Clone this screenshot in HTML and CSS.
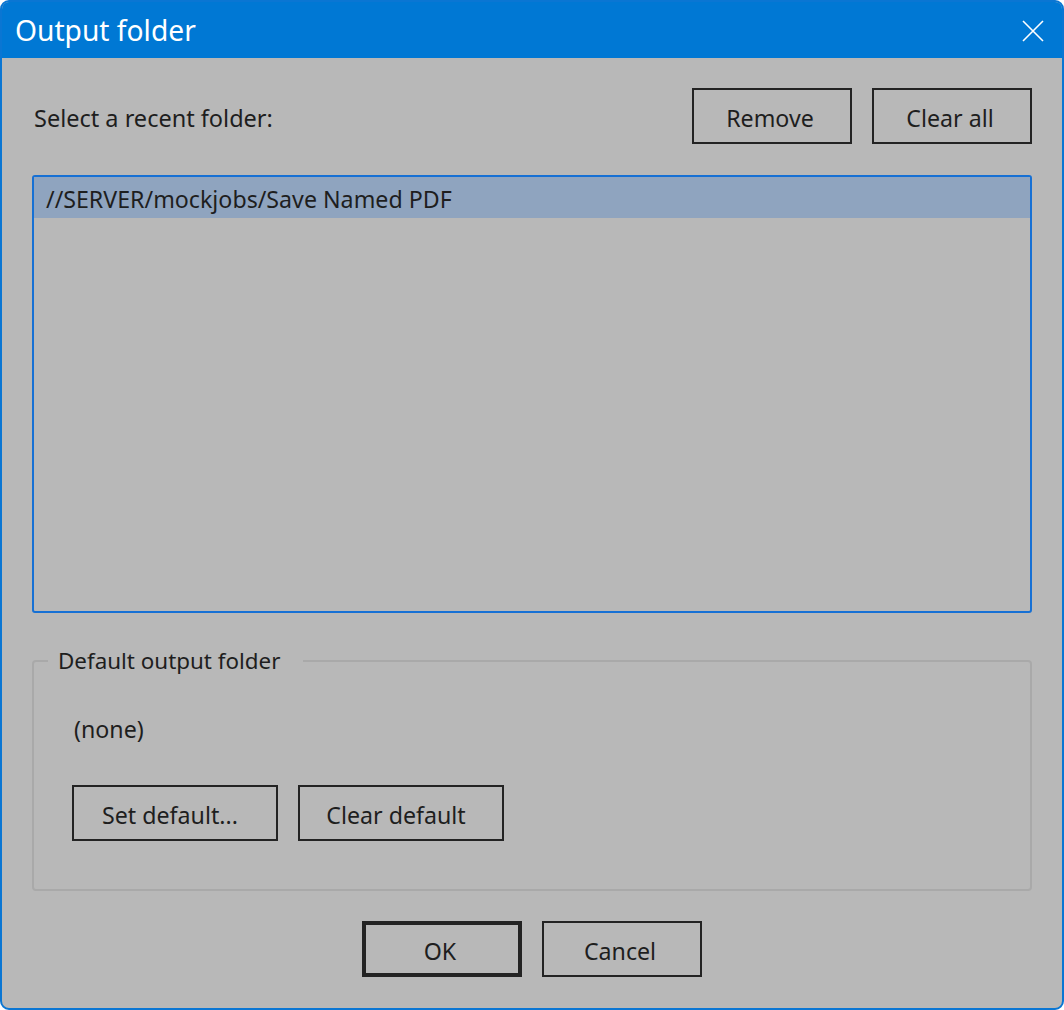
FILE: index.html
```html
<!DOCTYPE html>
<html lang="en">
<head>
<meta charset="utf-8">
<title>Output folder</title>
<link rel="stylesheet" href="styles.css">
</head>
<body>
<div class="window">
  <div class="titlebar">
    <span class="title">Output folder</span>
    <button class="close" aria-label="Close">
      <svg width="22" height="22" viewBox="0 0 22 22"><path d="M1 1 L21 21 M21 1 L1 21" stroke="#ffffff" stroke-width="1.6" fill="none"/></svg>
    </button>
  </div>
  <div class="content">
    <div class="toprow">
      <span class="label">Select a recent folder:</span>
      <div class="btns">
        <button class="btn">Remove</button>
        <button class="btn">Clear all</button>
      </div>
    </div>
    <div class="listbox">
      <div class="item selected">//SERVER/mockjobs/Save Named PDF</div>
    </div>
    <fieldset class="group">
      <legend class="legend">Default output folder</legend>
      <div class="none">(none)</div>
      <div class="groupbtns">
        <button class="btn wide">Set default...</button>
        <button class="btn wide">Clear default</button>
      </div>
    </fieldset>
    <div class="footer">
      <button class="btn default">OK</button>
      <button class="btn">Cancel</button>
    </div>
  </div>
</div>
</body>
</html>
```
FILE: styles.css
```css
html, body {
  margin: 0;
  padding: 0;
  background: #ffffff;
}
body {
  font-family: "Noto Sans", "Open Sans", sans-serif;
  font-size: 23.2px;
  color: #1e1e1e;
}
.window {
  width: 1064px;
  height: 1010px;
  box-sizing: border-box;
  border: 2px solid #0a76d3;
  border-radius: 9px;
  overflow: hidden;
  background: #b8b8b8;
  display: flex;
  flex-direction: column;
}
.titlebar {
  height: 56px;
  flex: none;
  background: #0078d4;
  display: flex;
  align-items: center;
  justify-content: space-between;
  padding: 0 18px 0 13px;
}
.title {
  color: #ffffff;
  font-size: 28.2px;
  line-height: 1;
}
.close {
  background: none;
  border: 0;
  padding: 0;
  width: 22px;
  height: 22px;
  display: flex;
  margin-top: 1px;
}
.content {
  flex: 1;
  padding: 30px 30px 30px;
  display: flex;
  flex-direction: column;
}
.toprow {
  height: 56px;
  display: flex;
  align-items: center;
  justify-content: space-between;
  margin-bottom: 31px;
}
.label {
  padding-left: 2px;
  padding-top: 4px;
  font-size: 23.5px;
}
.btns, .groupbtns, .footer {
  display: flex;
  gap: 20px;
}
.btn {
  box-sizing: border-box;
  width: 160px;
  height: 56px;
  border: 2px solid #232323;
  background: transparent;
  font-family: inherit;
  font-size: 23.2px;
  color: #1e1e1e;
  padding: 3px 4px 0 0;
}
.btn.wide {
  width: 206px;
  padding-right: 10px;
}
.btn.default {
  border-width: 4px;
}
.listbox {
  height: 438px;
  box-sizing: border-box;
  border: 2px solid #1670d4;
  border-radius: 3px;
  flex: none;
}
.item {
  height: 41px;
  line-height: 45px;
  padding-left: 12px;
  overflow: hidden;
}
.item.selected {
  background: #8fa4bf;
}
.group {
  margin: 33px 0 0;
  padding: 0 0 0 38px;
  border: 2px solid #a9a9a9;
  border-radius: 4px;
  height: 245px;
  box-sizing: border-box;
  min-width: 0;
}
.legend {
  margin-left: -24px;
  padding: 0 23px 0 10px;
  line-height: 30px;
  font-size: 22.4px;
}
.none {
  margin-top: 37px;
  padding-left: 2px;
  line-height: 32px;
}
.groupbtns {
  margin-top: 40px;
}
.footer {
  justify-content: center;
  margin-top: 30px;
}
```
